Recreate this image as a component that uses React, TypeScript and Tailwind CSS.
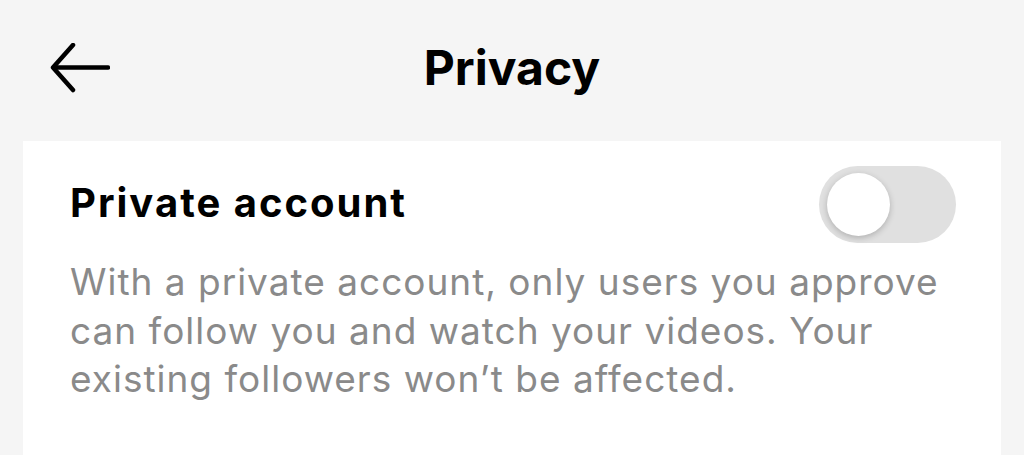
import React from "react";

export default function App() {
  return (
    <div className="w-[1024px] h-[455px] overflow-hidden bg-[#f5f5f5]" style={{ fontFamily: "Inter, 'Liberation Sans', sans-serif" }}>
      <div className="relative h-[141px] flex items-center justify-center">
        <button className="absolute left-[50px] top-[43px] w-[60px] h-[50px] flex items-center justify-center">
          <svg width="60" height="50" viewBox="0 0 60 50" fill="none" stroke="#000" strokeWidth="4.5" strokeLinecap="round" strokeLinejoin="round">
            <path d="M58 24.5 H4" />
            <path d="M23 2 L3 24.5 L23 47" />
          </svg>
        </button>
        <h1 className="text-[48px] font-bold text-black leading-none -mt-[6px]">Privacy</h1>
      </div>
      <div className="mx-[23px] bg-white h-[314px] pl-[47px] pr-[45px] pt-[25px]">
        <div className="flex items-center justify-between">
          <span className="text-[40px] font-bold tracking-[2px] text-black leading-none -mt-[3px]">Private account</span>
          <div className="w-[137px] h-[77px] rounded-full bg-[#e0e0e0] flex items-center pl-[8px]">
            <div className="w-[63px] h-[63px] rounded-full bg-white shadow-[0_2px_6px_rgba(0,0,0,0.22)]" />
          </div>
        </div>
        <p className="mt-[15px] text-[37px] tracking-[1px] leading-[48.5px] text-[#8a8a8a] whitespace-nowrap">
          With a private account, only users you approve<br />
          can follow you and watch your videos. Your<br />
          existing followers won’t be affected.
        </p>
      </div>
    </div>
  );
}
